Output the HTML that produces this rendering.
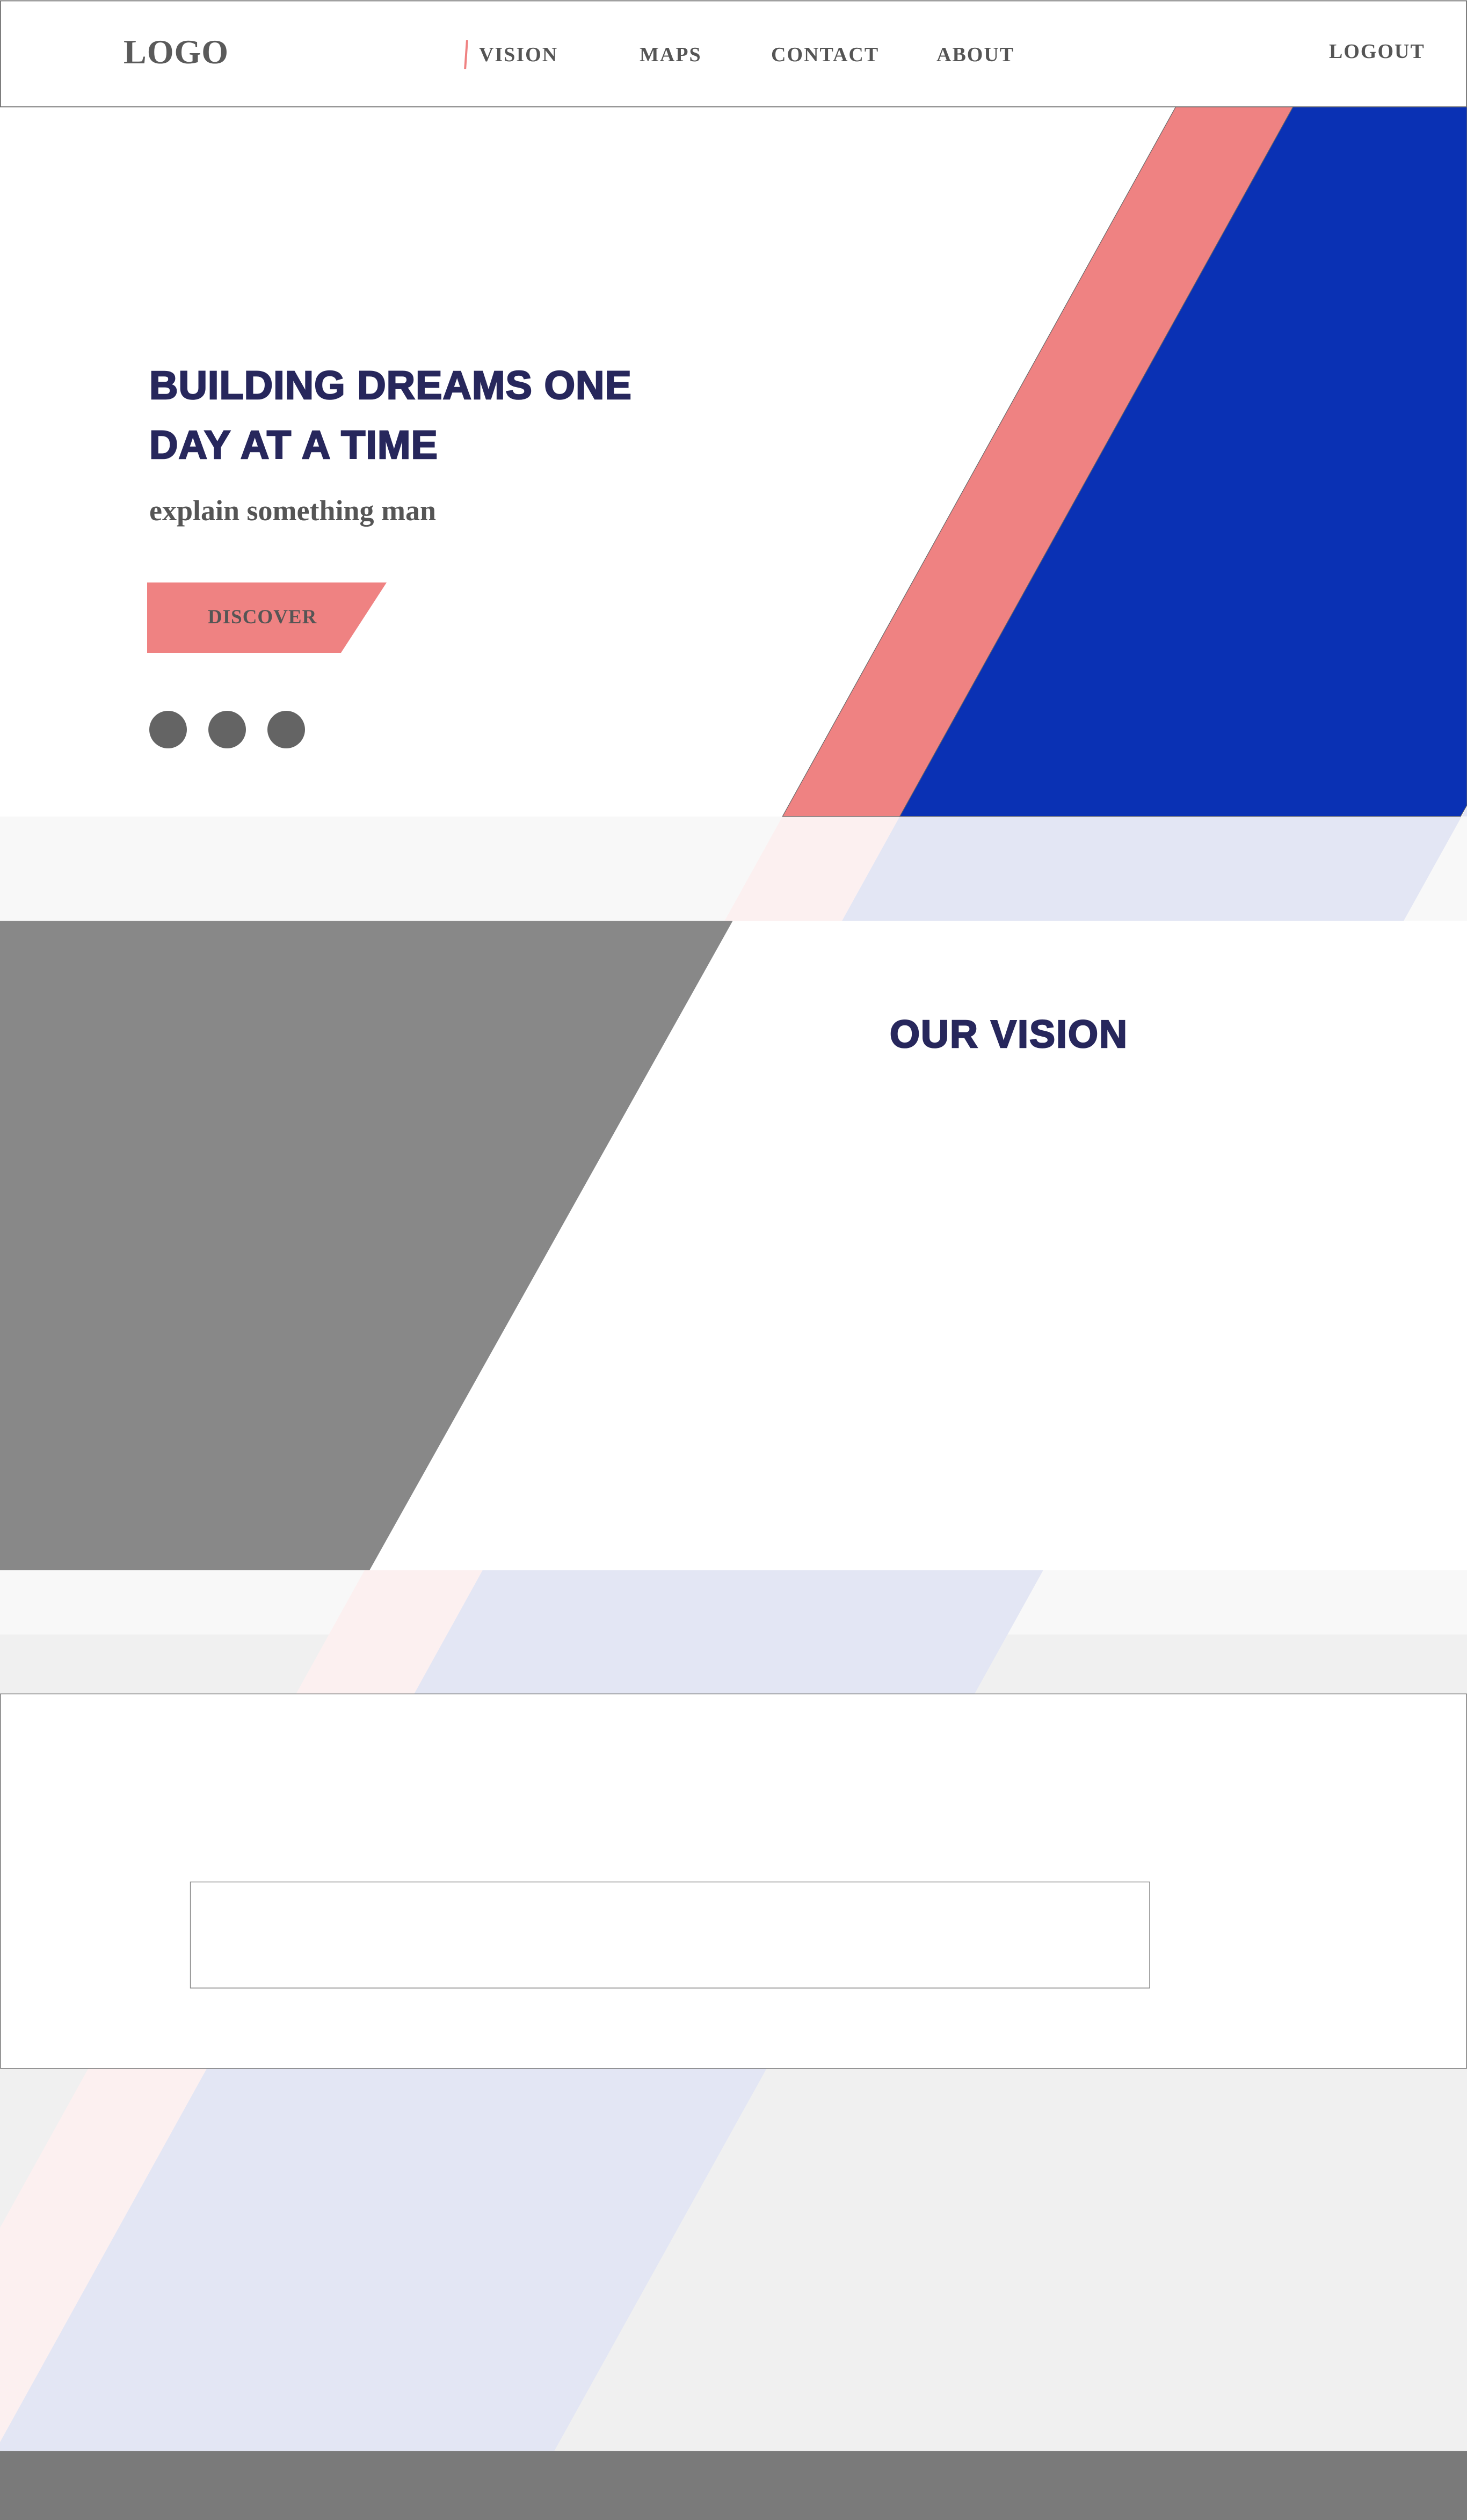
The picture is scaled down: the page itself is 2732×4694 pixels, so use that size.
<!DOCTYPE html>
<html><head><meta charset="utf-8"><style>
html,body{margin:0;padding:0}
body{width:2732px;height:4694px;position:relative;overflow:hidden;background:#fff}
svg.bg{position:absolute;left:0;top:0}
.t{position:absolute;white-space:nowrap;margin:0}
.nav{font-family:"Liberation Serif",serif;font-weight:bold;font-size:38px;color:#555;letter-spacing:2px;top:80px}
.h{font-family:"Liberation Sans",sans-serif;font-weight:900;font-size:74px;color:#27275c;letter-spacing:1px;-webkit-text-stroke:2.5px #27275c}
</style></head><body>
<svg class="bg" width="2732" height="4694" viewBox="0 0 913 1568" preserveAspectRatio="none">
<rect x="0" y="0" width="913" height="1568" fill="#fff"/>
<rect x="0" y="508" width="913" height="65" fill="#f8f8f8"/>
<rect x="0" y="977" width="913" height="40" fill="#f8f8f8"/>
<rect x="0" y="1017" width="913" height="508" fill="#f0f0f0"/>
<polygon points="487,508 560,508 -3,1525 -77,1525" fill="#fcf0f0"/>
<polygon points="560,508 913,508 913,502 345,1525 -3,1525" fill="#e3e6f4"/>
<polygon points="732,66 805,66 560,508 487,508" fill="#ef8282" stroke="#666" stroke-width="0.4"/>
<polygon points="805,66 913,66 913,501 909,508 560,508" fill="#0a31b4" stroke="#666" stroke-width="0.4"/>
<rect x="0" y="573" width="913" height="404" fill="#fff"/>
<polygon points="0,573 456,573 230,977 0,977" fill="#888"/>
<rect x="0.3" y="1054" width="912.4" height="233" fill="#fff" stroke="#777" stroke-width="0.5"/>
<rect x="118.5" y="1171" width="597" height="66" fill="#fff" stroke="#888" stroke-width="0.5"/>
<rect x="0" y="1525" width="913" height="43" fill="#7a7a7a"/>
<rect x="0.3" y="0.5" width="912.4" height="66" fill="#fff" stroke="#707070" stroke-width="0.6"/>
</svg>

<div class="t" style="left:230px;top:60px;font-family:'Liberation Serif',serif;font-weight:bold;font-size:64px;color:#5a5a5a;letter-spacing:1px">LOGO</div>
<div style="position:absolute;left:866px;top:75px;width:4px;height:54px;background:#ef8282;transform:skewX(-4deg)"></div>
<div class="t nav" style="left:892px">VISION</div>
<div class="t nav" style="left:1191px">MAPS</div>
<div class="t nav" style="left:1436px">CONTACT</div>
<div class="t nav" style="left:1744px">ABOUT</div>
<div class="t nav" style="left:2475px;top:74px">LOGOUT</div>

<div class="t h" style="left:278px;top:675px">BUILDING DREAMS ONE</div>
<div class="t h" style="left:278px;top:786px">DAY AT A TIME</div>
<div class="t" style="left:278px;top:920px;font-family:'Liberation Serif',serif;font-weight:bold;font-size:54px;color:#555">explain something man</div>

<svg style="position:absolute;left:274px;top:1085px" width="450" height="132"><polygon points="0,0 446,0 361,131 0,131" fill="#ef8282"/></svg>
<div class="t" style="left:387px;top:1128px;font-family:'Liberation Serif',serif;font-weight:bold;font-size:37px;color:#555;letter-spacing:1px">DISCOVER</div>

<div style="position:absolute;left:278px;top:1324px;width:70px;height:70px;border-radius:50%;background:#646464"></div>
<div style="position:absolute;left:388px;top:1324px;width:70px;height:70px;border-radius:50%;background:#646464"></div>
<div style="position:absolute;left:498px;top:1324px;width:70px;height:70px;border-radius:50%;background:#646464"></div>

<div class="t h" style="left:1657px;top:1886px;font-size:72px;letter-spacing:2px">OUR VISION</div>
</body></html>
